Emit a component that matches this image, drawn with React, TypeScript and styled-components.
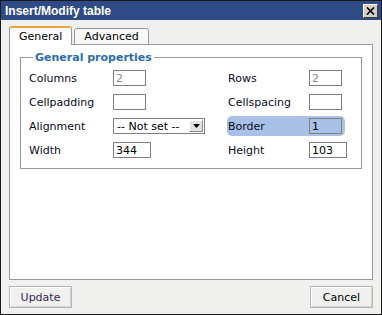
import styled, { createGlobalStyle } from 'styled-components';

const GlobalStyle = createGlobalStyle`
  html, body { margin: 0; padding: 0; background: #f0f0ee; }
  body { font-family: "DejaVu Sans", Verdana, sans-serif; font-size: 11px; }
  * { box-sizing: border-box; }
`;

const Window = styled.div`
  width: 382px;
  height: 315px;
  border: 1px solid #1a1a1a;
  background: #f0f0ee;
  display: flex;
  flex-direction: column;
`;

const TitleBar = styled.div`
  height: 19px;
  background: #2e4b88;
  display: flex;
  align-items: center;
  justify-content: space-between;
  padding: 0 3px 0 4px;
`;

const Title = styled.span`
  color: #fff;
  font-family: "Liberation Sans", Arial, sans-serif;
  font-weight: bold;
  font-size: 12px;
`;

const CloseButton = styled.button`
  width: 15px;
  height: 14px;
  padding: 0;
  background: #d4d0c8;
  border: 1px solid;
  border-color: #fff #404040 #404040 #fff;
  display: flex;
  align-items: center;
  justify-content: center;
`;

const Body = styled.div`
  flex: 1;
  display: flex;
  flex-direction: column;
  padding: 7px 8px 0 8px;
`;

const Tabs = styled.div`
  display: flex;
  align-items: flex-end;
  gap: 2px;
  height: 18px;
  position: relative;
  z-index: 1;
  margin-bottom: -1px;
`;

const Tab = styled.div<{ $active?: boolean }>`
  height: ${p => (p.$active ? '19px' : '17px')};
  padding: 0 9px;
  display: flex;
  align-items: center;
  border: 1px solid #919b9c;
  border-bottom: ${p => (p.$active ? 'none' : '1px solid #919b9c')};
  border-top: ${p => (p.$active ? '2px solid #e8a33d' : '1px solid #919b9c')};
  border-radius: 3px 3px 0 0;
  background: ${p => (p.$active ? '#fff' : '#f7f7f5')};
  color: #000;
`;

const Panel = styled.div`
  height: 236px;
  background: #fff;
  border: 1px solid #919b9c;
  padding: 6px 10px 0 10px;
`;

const Fieldset = styled.fieldset`
  margin: 0;
  border: 1px solid #919b9c;
  padding: 2px 8px 6px 8px;
`;

const Legend = styled.legend`
  color: #2b6cb5;
  font-weight: bold;
  padding: 0 2px;
  margin-left: 4px;
`;

const Row = styled.div`
  display: flex;
  align-items: center;
  height: 24px;
`;

const Half = styled.div`
  display: flex;
  align-items: center;
  width: 199px;
`;

const RightHalf = styled.div<{ $highlight?: boolean }>`
  display: flex;
  align-items: center;
  height: 20px;
  margin-left: -1px;
  padding: 0 3px 0 1px;
  border-radius: 5px;
  background: ${p => (p.$highlight ? '#a9c1e6' : 'transparent')};
`;

const Label = styled.label<{ $w: number }>`
  width: ${p => p.$w}px;
  color: #0a0a1e;
`;

const TextInput = styled.input<{ $w: number }>`
  width: ${p => p.$w}px;
  height: 16px;
  border: 1px solid #808080;
  padding: 0 2px;
  font: inherit;
  color: #000;
  background: transparent;
  &:disabled { color: #8a8a8a; background: #fff; }
`;

const Select = styled.div`
  width: 92px;
  height: 16px;
  border: 1px solid #808080;
  display: flex;
  align-items: center;
  justify-content: space-between;
  padding: 0 0 0 3px;
`;

const SelectArrow = styled.span`
  width: 14px;
  height: 12px;
  margin-right: 1px;
  background: #e3e3e0;
  border: 1px solid;
  border-color: #fff #888 #888 #fff;
  display: flex;
  align-items: center;
  justify-content: center;
`;

const Footer = styled.div`
  display: flex;
  justify-content: space-between;
  padding-top: 6px;
`;

const Button = styled.button<{ $tone?: string }>`
  height: 22px;
  min-width: 63px;
  padding: 0 8px;
  font: inherit;
  font-size: 11px;
  color: ${p => p.$tone ?? '#000'};
  background: #f0f0ee;
  border: 1px solid #b4b4b4;
  box-shadow: inset 1px 1px 0 #fff, inset -1px -1px 0 #d4d4d2;
`;

export default function App() {
  return (
    <>
      <GlobalStyle />
      <Window>
        <TitleBar>
          <Title>Insert/Modify table</Title>
          <CloseButton aria-label="Close">
            <svg width="9" height="8" viewBox="0 0 9 8">
              <path d="M1 0.5 L8 7.5 M8 0.5 L1 7.5" stroke="#000" strokeWidth="1.6" />
            </svg>
          </CloseButton>
        </TitleBar>
        <Body>
          <Tabs>
            <Tab $active>General</Tab>
            <Tab>Advanced</Tab>
          </Tabs>
          <Panel>
            <Fieldset>
              <Legend>General properties</Legend>
              <Row>
                <Half>
                  <Label $w={84}>Columns</Label>
                  <TextInput $w={33} disabled value="2" readOnly />
                </Half>
                <RightHalf>
                  <Label $w={81}>Rows</Label>
                  <TextInput $w={33} disabled value="2" readOnly />
                </RightHalf>
              </Row>
              <Row>
                <Half>
                  <Label $w={84}>Cellpadding</Label>
                  <TextInput $w={33} defaultValue="" />
                </Half>
                <RightHalf>
                  <Label $w={81}>Cellspacing</Label>
                  <TextInput $w={33} defaultValue="" />
                </RightHalf>
              </Row>
              <Row>
                <Half>
                  <Label $w={84}>Alignment</Label>
                  <Select>
                    <span>-- Not set --</span>
                    <SelectArrow>
                      <svg width="7" height="4" viewBox="0 0 7 4">
                        <path d="M0 0 H7 L3.5 4 Z" fill="#000" />
                      </svg>
                    </SelectArrow>
                  </Select>
                </Half>
                <RightHalf $highlight>
                  <Label $w={81}>Border</Label>
                  <TextInput $w={33} defaultValue="1" />
                </RightHalf>
              </Row>
              <Row>
                <Half>
                  <Label $w={84}>Width</Label>
                  <TextInput $w={38} defaultValue="344" />
                </Half>
                <RightHalf>
                  <Label $w={81}>Height</Label>
                  <TextInput $w={38} defaultValue="103" />
                </RightHalf>
              </Row>
            </Fieldset>
          </Panel>
          <Footer>
            <Button $tone="#3b1f5e">Update</Button>
            <Button>Cancel</Button>
          </Footer>
        </Body>
      </Window>
    </>
  );
}
